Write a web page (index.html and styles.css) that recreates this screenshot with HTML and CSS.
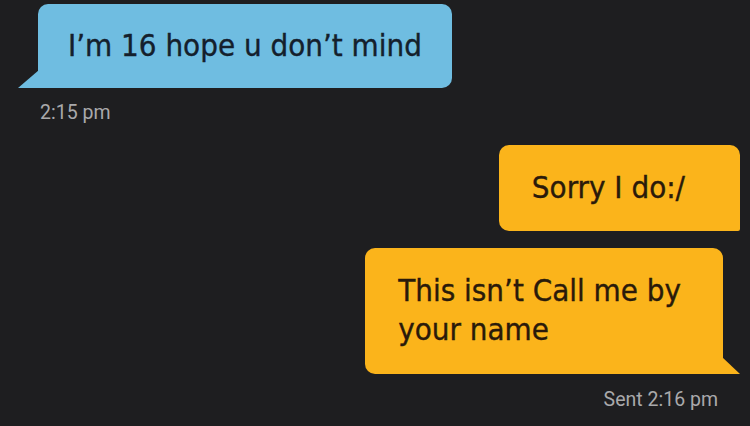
FILE: index.html
```html
<!DOCTYPE html>
<html>
<head>
	<meta charset="utf-8">
	<meta name="viewport" content="width=device-width, initial-scale=1">
	<title>Chat</title>
	<link rel="stylesheet" href="styles.css">
</head>
<body>
<div class="chat">
	<div class="msg in">
		<div class="bubble blue">I’m 16 hope u don’t mind</div>
		<div class="time">2:15 pm</div>
	</div>
	<div class="msg out">
		<div class="bubble orange first">Sorry I do:/</div>
		<div class="bubble orange last">This isn’t Call me by<br>your name</div>
		<div class="time">Sent 2:16 pm</div>
	</div>
</div>
</body>
</html>
```
FILE: styles.css
```css
body{
	margin: 0;
	background-color: #1e1e20;
	font-family: "DejaVu Sans Condensed", "DejaVu Sans", sans-serif;
}
.chat{
	width: 750px;
	height: 426px;
	overflow: hidden;
	display: flex;
	flex-direction: column;
}
.msg{
	display: flex;
	flex-direction: column;
}
.in{
	align-items: flex-start;
	padding: 4px 0 0 38px;
}
.out{
	align-items: flex-end;
	padding-top: 21px;
	padding-right: 10px;
}
.bubble{
	position: relative;
	font-size: 31px;
	line-height: 39px;
	border-radius: 10px;
	white-space: nowrap;
	-webkit-text-stroke: 0.35px currentColor;
}
.blue{
	background-color: #6fbde1;
	color: #14202c;
	padding: 22px 30px 23px 30px;
	border-bottom-left-radius: 0;
}
.blue::after{
	content: "";
	position: absolute;
	left: -20px;
	bottom: 0;
	width: 21px;
	height: 18px;
	background-color: #6fbde1;
	clip-path: polygon(100% 0, 100% 100%, 0 100%);
}
.orange{
	background-color: #fbb41b;
	color: #2a1a0a;
}
.first{
	padding: 23px 55px 24px 33px;
	border-bottom-right-radius: 2px;
}
.last{
	margin-top: 17px;
	margin-right: 17px;
	padding: 23px 42px 25px 33px;
	border-bottom-right-radius: 0;
}
.last::after{
	content: "";
	position: absolute;
	right: -17px;
	bottom: 0;
	width: 18px;
	height: 17px;
	background-color: #fbb41b;
	clip-path: polygon(0 0, 100% 100%, 0 100%);
}
.time{
	font-family: Roboto, sans-serif;
	font-size: 19.5px;
	color: #a9a9ab;
	margin-top: 13px;
}
.in .time{
	margin-left: 2px;
}
.out .time{
	margin-right: 22px;
	margin-top: 14px;
}
```
